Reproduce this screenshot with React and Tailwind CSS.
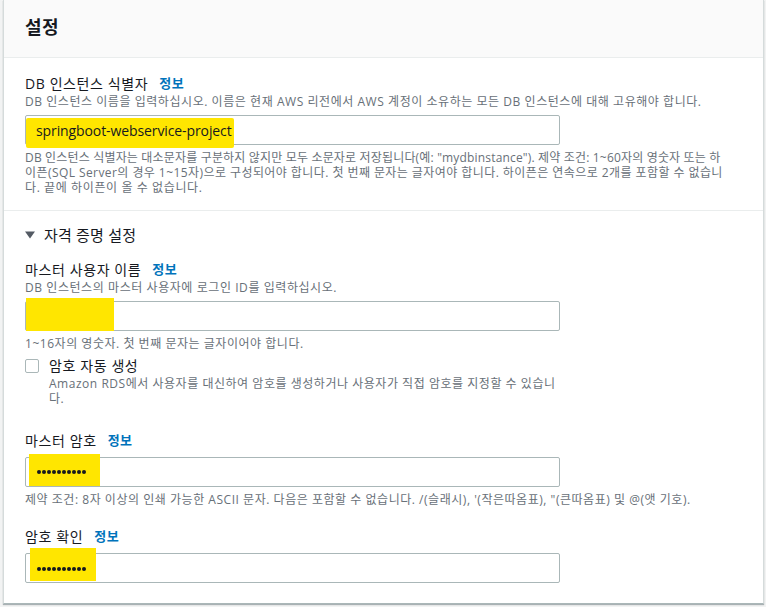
import React from 'react';

const font = { fontFamily: '"Open Sans", "Noto Sans CJK KR", sans-serif' };

function Info() {
  return <span className="ml-[11px] text-[13px] font-bold text-[#0073bb] tracking-[0.5px]">정보</span>;
}

function Dots() {
  return (
    <span className="flex gap-[1px]">
      {Array.from({ length: 10 }).map((_, i) => (
        <span key={i} className="block w-[4px] h-[4px] rounded-full bg-[#16191f]" />
      ))}
    </span>
  );
}

function Field({ children, hl }) {
  return (
    <div className="relative w-[535px] h-[30px] border border-[#aab7b8] rounded-[2px] bg-white">
      <div className={`absolute bg-[#ffe600] ${hl}`} />
      <div className="absolute inset-0 flex items-center pl-[10px]">{children}</div>
    </div>
  );
}

export default function App() {
  return (
    <div className="w-[766px] h-[607px] bg-[#f2f3f3] overflow-hidden" style={font}>
      <div className="ml-[3px] w-[761px] h-[604px] bg-white border-x border-b border-[#d5dbdb] border-b-[#aab7b8] shadow-[0_1px_1px_rgba(0,28,36,0.3)]">
        <div className="h-[58px] bg-[#fafafa] border-b border-[#eaeded] flex items-center pl-[21px] pb-[3px]">
          <h2 className="text-[18px] font-bold text-[#16191f] tracking-[0.5px]">설정</h2>
        </div>

        <div className="pl-[21px] pt-[15px] pb-[15px] border-b border-[#eaeded]">
          <div className="h-[21px] flex items-center text-[14px] text-[#16191f] tracking-[0.6px]">
            DB 인스턴스 식별자<Info />
          </div>
          <div className="h-[16px] leading-[16px] text-[12px] text-[#687078] whitespace-nowrap tracking-[0.55px]">
            DB 인스턴스 이름을 입력하십시오. 이름은 현재 AWS 리전에서 AWS 계정이 소유하는 모든 DB 인스턴스에 대해 고유해야 합니다.
          </div>
          <div className="mt-[5px]">
            <Field hl="left-[0px] top-[2px] w-[208px] h-[30px] rounded-[2px]">
              <span className="text-[14px] text-[#16191f] tracking-[-0.1px]">springboot-webservice-project</span>
            </Field>
          </div>
          <div className="mt-[5px] text-[12px] leading-[15px] text-[#687078] whitespace-nowrap">
            <div className="tracking-[0.17px]">DB 인스턴스 식별자는 대소문자를 구분하지 않지만 모두 소문자로 저장됩니다(예: "mydbinstance"). 제약 조건: 1~60자의 영숫자 또는 하</div>
            <div className="tracking-[0.43px]">이픈(SQL Server의 경우 1~15자)으로 구성되어야 합니다. 첫 번째 문자는 글자여야 합니다. 하이픈은 연속으로 2개를 포함할 수 없습니</div>
            <div className="tracking-[0.6px]">다. 끝에 하이픈이 올 수 없습니다.</div>
          </div>
        </div>

        <div className="pl-[21px] pt-[12px] pb-[20px]">
          <div className="h-[24px] flex items-center text-[15px] text-[#16191f] tracking-[0.2px]">
            <svg width="10" height="8" viewBox="0 0 10 8" className="mr-[9px]">
              <path d="M0 0.5 H10 L5 7.5 Z" fill="#545b64" />
            </svg>
            자격 증명 설정
          </div>

          <div className="mt-[12px] h-[21px] flex items-center text-[14px] text-[#16191f] tracking-[0.6px]">
            마스터 사용자 이름<Info />
          </div>
          <div className="h-[16px] leading-[16px] text-[12px] text-[#687078] whitespace-nowrap tracking-[0.57px]">
            DB 인스턴스의 마스터 사용자에 로그인 ID를 입력하십시오.
          </div>
          <div className="mt-[5px]">
            <Field hl="left-[0px] -top-[4px] w-[88px] h-[33px]" />
          </div>
          <div className="mt-[5px] text-[12px] leading-[15px] text-[#687078] whitespace-nowrap tracking-[0.53px]">
            1~16자의 영숫자. 첫 번째 문자는 글자이어야 합니다.
          </div>

          <div className="mt-[5px] flex">
            <span className="mt-[3px] w-[14px] h-[14px] border border-[#aab7b8] rounded-[2px] bg-white" />
            <div className="ml-[10px]">
              <div className="h-[20px] leading-[20px] text-[14px] text-[#16191f] tracking-[0.6px]">암호 자동 생성</div>
              <div className="text-[12px] leading-[15px] text-[#687078] whitespace-nowrap tracking-[0.53px]">
                <div>Amazon RDS에서 사용자를 대신하여 암호를 생성하거나 사용자가 직접 암호를 지정할 수 있습니</div>
                <div>다.</div>
              </div>
            </div>
          </div>

          <div className="mt-[24px] h-[21px] flex items-center text-[14px] text-[#16191f] tracking-[0.6px]">
            마스터 암호<Info />
          </div>
          <div className="mt-[6px]">
            <Field hl="left-[3px] -top-[4px] w-[71px] h-[32px]">
              <span className="ml-[1px]"><Dots /></span>
            </Field>
          </div>
          <div className="mt-[5px] text-[12px] leading-[15px] text-[#687078] whitespace-nowrap tracking-[0.53px]">
            제약 조건: 8자 이상의 인쇄 가능한 ASCII 문자. 다음은 포함할 수 없습니다. /(슬래시), '(작은따옴표), "(큰따옴표) 및 @(앳 기호).
          </div>

          <div className="mt-[19px] h-[21px] flex items-center text-[14px] text-[#16191f] tracking-[0.6px]">
            암호 확인<Info />
          </div>
          <div className="mt-[6px]">
            <Field hl="left-[4px] -top-[6px] w-[66px] h-[33px]">
              <span className="ml-[1px] mt-[2px]"><Dots /></span>
            </Field>
          </div>
        </div>
      </div>
    </div>
  );
}
